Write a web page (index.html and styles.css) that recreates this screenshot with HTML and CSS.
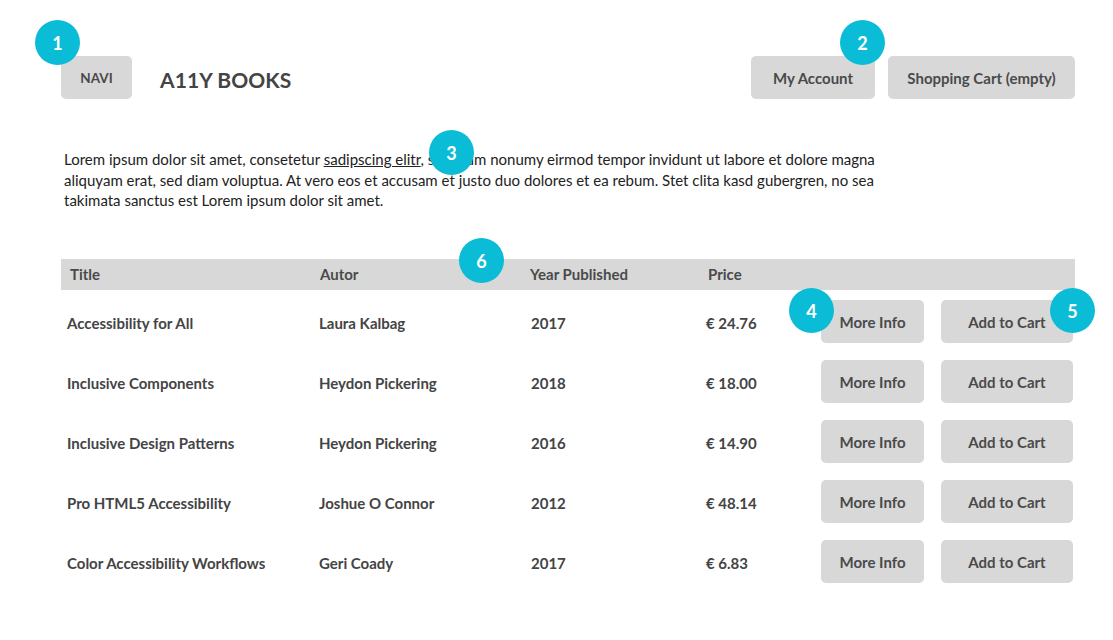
FILE: index.html
```html
<!DOCTYPE html>
<html lang="en">
<head>
<meta charset="utf-8">
<title>A11Y Books</title>
<link rel="stylesheet" href="styles.css">
</head>
<body>
<div class="page">
  <header class="topbar">
    <div class="brand">
      <button class="btn btn-navi">NAVI</button>
      <h1 class="logo">A11Y BOOKS</h1>
    </div>
    <nav class="account">
      <button class="btn btn-account">My Account</button>
      <button class="btn btn-cart">Shopping Cart (empty)</button>
    </nav>
  </header>

  <p class="intro">Lorem ipsum dolor sit amet, consetetur <a href="#">sadipscing elitr</a>, sed diam nonumy eirmod tempor invidunt ut labore et dolore magna aliquyam erat, sed diam voluptua. At vero eos et accusam et justo duo dolores et ea rebum. Stet clita kasd gubergren, no sea takimata sanctus est Lorem ipsum dolor sit amet.</p>

  <div class="table">
    <div class="thead">
      <span>Title</span><span>Autor</span><span>Year Published</span><span>Price</span><span></span>
    </div>
    <div class="row">
      <span>Accessibility for All</span><span>Laura Kalbag</span><span>2017</span><span>€ 24.76</span>
      <span class="actions"><button class="btn btn-info">More Info</button><button class="btn btn-add">Add to Cart</button></span>
    </div>
    <div class="row">
      <span>Inclusive Components</span><span>Heydon Pickering</span><span>2018</span><span>€ 18.00</span>
      <span class="actions"><button class="btn btn-info">More Info</button><button class="btn btn-add">Add to Cart</button></span>
    </div>
    <div class="row">
      <span>Inclusive Design Patterns</span><span>Heydon Pickering</span><span>2016</span><span>€ 14.90</span>
      <span class="actions"><button class="btn btn-info">More Info</button><button class="btn btn-add">Add to Cart</button></span>
    </div>
    <div class="row">
      <span>Pro HTML5 Accessibility</span><span>Joshue O Connor</span><span>2012</span><span>€ 48.14</span>
      <span class="actions"><button class="btn btn-info">More Info</button><button class="btn btn-add">Add to Cart</button></span>
    </div>
    <div class="row">
      <span>Color Accessibility Workflows</span><span>Geri Coady</span><span>2017</span><span>€ 6.83</span>
      <span class="actions"><button class="btn btn-info">More Info</button><button class="btn btn-add">Add to Cart</button></span>
    </div>
  </div>

  <span class="badge b1">1</span>
  <span class="badge b2">2</span>
  <span class="badge b3">3</span>
  <span class="badge b4">4</span>
  <span class="badge b5">5</span>
  <span class="badge b6">6</span>
</div>
</body>
</html>
```

FILE: styles.css
```css
* { box-sizing: border-box; }
html, body { margin: 0; padding: 0; background: #fff; }
body {
  font-family: "Lato", "Open Sans", sans-serif;
  color: #444;
  width: 1113px;
  height: 640px;
  overflow: hidden;
}
.page {
  position: relative;
  padding: 56px 38px 0 61px;
}
.topbar {
  display: flex;
  justify-content: space-between;
  align-items: center;
  height: 43px;
}
.brand { display: flex; align-items: center; gap: 28px; }
.logo {
  margin: 4px 0 0;
  font-size: 21px;
  font-weight: 700;
  color: #444;
  letter-spacing: 0.1px;
}
.account { display: flex; gap: 13px; }
.btn {
  font-family: inherit;
  font-weight: 700;
  font-size: 15px;
  color: #4a4a4a;
  background: #d8d8d8;
  border: 0;
  border-radius: 5px;
  height: 43px;
  padding: 1px 0 0;
  cursor: pointer;
}
.btn-navi { width: 71px; font-size: 13.5px; }
.btn-account { width: 124px; }
.btn-cart { width: 187px; }

.intro {
  margin: 50px 0 0 3px;
  width: 870px;
  font-size: 15px;
  line-height: 20.5px;
  color: #222;
}
.intro a { color: #222; text-decoration: underline; }

.table { margin-top: 48px; }
.thead, .row {
  display: grid;
  grid-template-columns: 252px 211px 176px 120px 1fr;
  align-items: center;
}
.thead {
  height: 31px;
  background: #d8d8d8;
  font-weight: 700;
  font-size: 15px;
  color: #4a4a4a;
}
.thead span { padding-left: 9px; }
.thead span:nth-child(2) { padding-left: 7px; }
.thead span:nth-child(3) { padding-left: 6px; }
.thead span:nth-child(4) { padding-left: 8px; }
.row {
  height: 60px;
  padding-top: 3px;
  font-weight: 700;
  font-size: 15px;
  color: #444;
}
.row span { padding-left: 6px; padding-top: 4px; }
.row span:nth-child(3) { padding-left: 7px; }
.actions {
  display: flex;
  gap: 17px;
  padding-left: 0 !important;
  padding-top: 0 !important;
  margin-left: 1px;
}
.btn-info { width: 103px; }
.btn-add { width: 132px; }

.badge {
  position: absolute;
  width: 45px;
  height: 45px;
  border-radius: 50%;
  background: #0bbcd6;
  color: #fff;
  font-weight: 700;
  font-size: 18px;
  display: flex;
  align-items: center;
  justify-content: center;
}
.b1 { left: 35px; top: 20px; }
.b2 { left: 840px; top: 20px; }
.b3 { left: 429px; top: 130px; }
.b4 { left: 789px; top: 288px; }
.b5 { left: 1050px; top: 288px; }
.b6 { left: 459px; top: 238px; }
```
